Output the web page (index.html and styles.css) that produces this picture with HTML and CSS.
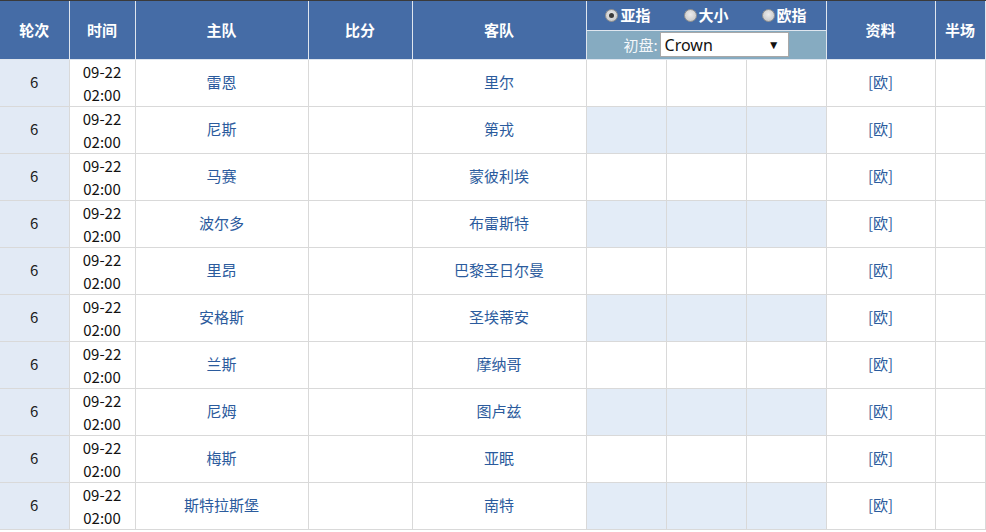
FILE: index.html
```html
<!DOCTYPE html>
<html lang="zh-CN">
<head>
<meta charset="utf-8">
<title>赛程</title>
<link rel="stylesheet" href="styles.css">
</head>
<body>
<div class="wrap">
<table class="sched">
  <colgroup>
    <col class="w1"><col class="w2"><col class="w3"><col class="w4"><col class="w5">
    <col class="w6"><col class="w6"><col class="w6"><col class="w9"><col class="w10">
  </colgroup>
  <thead>
    <tr class="ha">
      <th rowspan="2" class="first">轮次</th>
      <th rowspan="2">时间</th>
      <th rowspan="2">主队</th>
      <th rowspan="2">比分</th>
      <th rowspan="2">客队</th>
      <th colspan="3" class="radios">
        <div class="radio-row">
          <span class="opt"><i class="radio on"></i>亚指</span>
          <span class="opt"><i class="radio"></i>大小</span>
          <span class="opt"><i class="radio"></i>欧指</span>
        </div>
      </th>
      <th rowspan="2">资料</th>
      <th rowspan="2">半场</th>
    </tr>
    <tr class="hb">
      <th colspan="3" class="sub">
        <div class="sub-row">
          <span class="lbl">初盘:</span>
          <span class="fake-select"><span>Crown</span><span class="arr">▼</span></span>
        </div>
      </th>
    </tr>
  </thead>
  <tbody>
    <tr><td class="first">6</td><td class="time">09-22<br>02:00</td><td class="team">雷恩</td><td></td><td class="team">里尔</td><td></td><td></td><td></td><td class="team">[欧]</td><td></td></tr>
    <tr class="alt"><td class="first">6</td><td class="time">09-22<br>02:00</td><td class="team">尼斯</td><td></td><td class="team">第戎</td><td class="o"></td><td class="o"></td><td class="o"></td><td class="team">[欧]</td><td></td></tr>
    <tr><td class="first">6</td><td class="time">09-22<br>02:00</td><td class="team">马赛</td><td></td><td class="team">蒙彼利埃</td><td></td><td></td><td></td><td class="team">[欧]</td><td></td></tr>
    <tr class="alt"><td class="first">6</td><td class="time">09-22<br>02:00</td><td class="team">波尔多</td><td></td><td class="team">布雷斯特</td><td class="o"></td><td class="o"></td><td class="o"></td><td class="team">[欧]</td><td></td></tr>
    <tr><td class="first">6</td><td class="time">09-22<br>02:00</td><td class="team">里昂</td><td></td><td class="team">巴黎圣日尔曼</td><td></td><td></td><td></td><td class="team">[欧]</td><td></td></tr>
    <tr class="alt"><td class="first">6</td><td class="time">09-22<br>02:00</td><td class="team">安格斯</td><td></td><td class="team">圣埃蒂安</td><td class="o"></td><td class="o"></td><td class="o"></td><td class="team">[欧]</td><td></td></tr>
    <tr><td class="first">6</td><td class="time">09-22<br>02:00</td><td class="team">兰斯</td><td></td><td class="team">摩纳哥</td><td></td><td></td><td></td><td class="team">[欧]</td><td></td></tr>
    <tr class="alt"><td class="first">6</td><td class="time">09-22<br>02:00</td><td class="team">尼姆</td><td></td><td class="team">图卢兹</td><td class="o"></td><td class="o"></td><td class="o"></td><td class="team">[欧]</td><td></td></tr>
    <tr><td class="first">6</td><td class="time">09-22<br>02:00</td><td class="team">梅斯</td><td></td><td class="team">亚眠</td><td></td><td></td><td></td><td class="team">[欧]</td><td></td></tr>
    <tr class="alt"><td class="first">6</td><td class="time">09-22<br>02:00</td><td class="team">斯特拉斯堡</td><td></td><td class="team">南特</td><td class="o"></td><td class="o"></td><td class="o"></td><td class="team">[欧]</td><td></td></tr>
  </tbody>
</table>
</div>
</body>
</html>
```
FILE: styles.css
```css
html, body {
  margin: 0;
  padding: 0;
  background: #fff;
}
.wrap {
  width: 985px;
  border-top: 1px solid #3a3a3a;
  border-right: 1px solid #3a3a3a;
}
.sched {
  width: 985px;
  border-collapse: collapse;
  table-layout: fixed;
  font-family: "Noto Sans CJK SC", "Noto Sans", sans-serif;
  font-size: 15px;
  color: #222;
}
.w1 { width: 69px; }
.w2 { width: 66px; }
.w3 { width: 173px; }
.w4 { width: 104px; }
.w5 { width: 174px; }
.w6 { width: 80px; }
.w9 { width: 109px; }
.w10 { width: 50px; }

.sched th {
  background: #456ca6;
  color: #fff;
  font-weight: bold;
  font-size: 15px;
  border: 1px solid #dfe6ef;
  border-top: none;
  padding: 0 0 1px;
  text-align: center;
  vertical-align: middle;
}
.sched th.first, .sched td.first {
  border-left: none;
}
.ha { height: 29px; }
.hb { height: 29px; }
.sched th.radios {
  height: 28px;
}
.radio-row {
  display: flex;
  justify-content: center;
  gap: 33px;
}
.opt {
  display: flex;
  align-items: center;
  line-height: 20px;
}
.radio {
  display: inline-block;
  width: 11px;
  height: 11px;
  border-radius: 50%;
  border: 1px solid #8e8e8e;
  background: radial-gradient(circle at 50% 40%, #ececec 0%, #d0d0d0 65%, #b8b8b8 100%);
  margin-right: 2px;
  position: relative;
  box-sizing: content-box;
}
.radio.on::after {
  content: "";
  position: absolute;
  left: 3px;
  top: 3px;
  width: 5px;
  height: 5px;
  border-radius: 50%;
  background: #3a3a3a;
}
.sched th.sub {
  background: #86abc1;
  font-weight: normal;
}
.sub-row {
  display: flex;
  justify-content: center;
  align-items: center;
  gap: 2px;
}
.lbl {
  color: #f4f7fa;
  font-size: 15px;
}
.fake-select {
  box-sizing: border-box;
  width: 129px;
  height: 25px;
  background: #fff;
  border: 1px solid #a8a8a8;
  display: flex;
  align-items: center;
  justify-content: space-between;
  padding: 0 8px 0 4px;
  font-family: "Noto Sans", "Open Sans", sans-serif;
  font-size: 16px;
  color: #111;
}
.arr {
  font-size: 12px;
  color: #111;
}

.sched td {
  height: 43px;
  border: 1px solid #d9d9d9;
  padding: 0 0 3px;
  text-align: center;
  vertical-align: middle;
  background: #fff;
}
.sched td.time {
  height: 46px;
  padding: 0;
  line-height: 23px;
  color: #111;
}
.sched td.first {
  background: #e2eaf5;
}
.sched td.o {
  background: #e3ecf7;
}
.sched td.team {
  color: #2b5b9d;
}
```
